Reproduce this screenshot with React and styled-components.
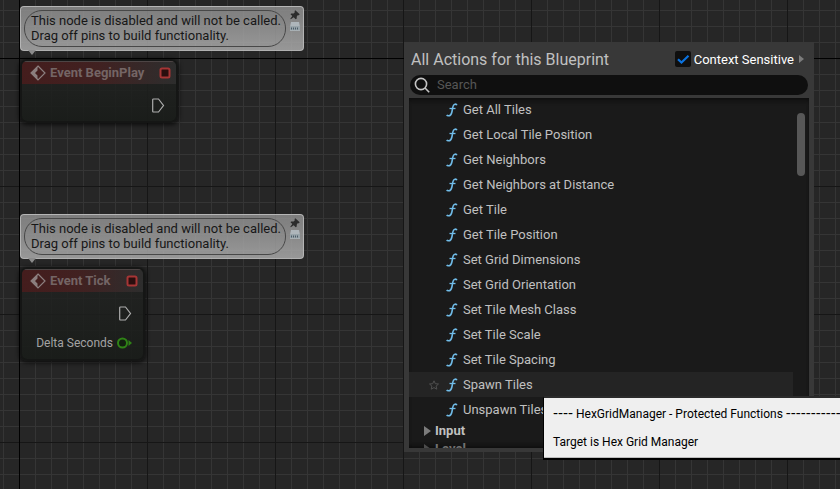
import React from "react";
import styled, { createGlobalStyle } from "styled-components";

const GlobalStyle = createGlobalStyle`
  * { box-sizing: border-box; }
  body {
    margin: 0;
    background: #262626;
    font-family: Roboto, "Liberation Sans", sans-serif;
    font-size: 13px;
    color: #c0c0c0;
  }
  button, input { font: inherit; color: inherit; }
`;

const Graph = styled.main`
  position: relative;
  min-height: 100vh;
  overflow: hidden;
  background-color: #262626;
  background-image:
    linear-gradient(90deg, #000 1px, transparent 1px),
    linear-gradient(#000 1px, transparent 1px),
    linear-gradient(90deg, #161616 1px, transparent 1px),
    linear-gradient(#161616 1px, transparent 1px),
    linear-gradient(90deg, #353535 1px, transparent 1px),
    linear-gradient(#353535 1px, transparent 1px);
  background-size: 1024px 1024px, 1024px 1024px, 128px 128px, 128px 128px, 16px 16px, 16px 16px;
  background-position: 19px 58px;
`;

const NodeSlot = styled.section`
  position: absolute;
  left: 20px;
  top: ${(p) => p.$top}px;
  display: flex;
  flex-direction: column;
  align-items: flex-start;
  gap: 8px;
`;

const Bubble = styled.div`
  position: relative;
  display: flex;
  gap: 4px;
  padding: 3px;
  border: 1px solid rgba(190, 190, 190, 0.8);
  border-radius: 4px;
  background: linear-gradient(rgba(150, 150, 150, 0.78), rgba(170, 170, 170, 0.86));
  &::after {
    content: "";
    position: absolute;
    left: 7px;
    top: 100%;
    border: 4px solid transparent;
    border-top: 5px solid #8b8b8b;
    border-bottom: 0;
  }
`;

const BubbleText = styled.p`
  margin: 0;
  padding: 2px 4px 3px 6px;
  border: 1px solid #484848;
  border-radius: 18px;
  line-height: 15px;
  color: #171717;
  white-space: nowrap;
`;

const BubbleTools = styled.div`
  display: flex;
  flex-direction: column;
  gap: 2px;
`;

const ToolButton = styled.button`
  display: flex;
  padding: 0;
  border: 0;
  background: none;
`;

const NodeBox = styled.article`
  width: ${(p) => p.$width}px;
  border: 2px solid #151615;
  border-radius: 7px;
  overflow: hidden;
  background: linear-gradient(rgba(34, 35, 34, 0.8), rgba(25, 28, 25, 0.92));
  box-shadow: 0 1px 4px 1px rgba(0, 0, 0, 0.65);
`;

const NodeHeader = styled.header`
  display: flex;
  align-items: center;
  gap: 4px;
  height: 23px;
  padding: 0 5px 0 8px;
  border-top: 1px solid #4d4545;
  background: linear-gradient(90deg, rgba(72, 28, 28, 0.9), rgba(70, 33, 33, 0.85) 50%, rgba(52, 46, 46, 0.8) 92%, rgba(48, 48, 48, 0.8));
`;

const NodeTitle = styled.h2`
  flex: 1;
  margin: 0;
  font-size: 13px;
  font-weight: 700;
  line-height: 16px;
  color: #746565;
  white-space: nowrap;
`;

const PinList = styled.div`
  display: flex;
  flex-direction: column;
  align-items: flex-end;
  gap: 14px;
  padding: 13px 11px 8px;
`;

const Pin = styled.div`
  display: flex;
  align-items: center;
  gap: 4px;
  height: 16px;
  font-size: 12px;
  color: #a3a3a3;
  white-space: nowrap;
`;

const Menu = styled.aside`
  position: absolute;
  left: 404px;
  top: 42px;
  width: 410px;
  padding: 5px 5px 4px;
  background: #383838;
`;

const MenuHeader = styled.header`
  display: flex;
  align-items: center;
  justify-content: space-between;
  height: 24px;
  padding: 0 5px 0 2px;
`;

const MenuTitle = styled.h1`
  margin: 0;
  font-size: 16px;
  font-weight: 400;
  color: #c0c0c0;
`;

const Context = styled.div`
  display: flex;
  align-items: center;
  gap: 5px;
  color: #fff;
`;

const CheckLabel = styled.label`
  display: flex;
  align-items: center;
  gap: 3px;
`;

const CheckSlot = styled.span`
  display: grid;
  > * { grid-area: 1 / 1; }
  svg { pointer-events: none; }
`;

const Checkbox = styled.input`
  appearance: none;
  width: 16px;
  height: 16px;
  margin: 0;
  border-radius: 2px;
  background: #0f0f0f;
`;

const SearchBar = styled.label`
  display: flex;
  align-items: center;
  gap: 7px;
  height: 20px;
  margin: 4px 1px 3px;
  padding: 0 10px 0 4px;
  border-radius: 10px;
  background: #0f0f0f;
`;

const SearchInput = styled.input`
  flex: 1;
  min-width: 0;
  padding: 0 0 2px;
  border: 0;
  outline: 0;
  background: none;
  &::placeholder { color: #565656; opacity: 1; }
`;

const Viewport = styled.div`
  display: flex;
  max-height: 350px;
  overflow: hidden;
  background: #1a1a1a;
  box-shadow: inset 0 5px 5px -3px #0c0c0c, inset 0 -5px 5px -3px #0c0c0c;
`;

const Actions = styled.ul`
  flex: 1;
  margin: -1px 0 0;
  padding: 0;
  list-style: none;
`;

const ActionRow = styled.li`
  display: flex;
  align-items: center;
  height: 25px;
  padding-left: 19px;
  background: ${(p) => (p.$active ? "#242424" : "transparent")};
`;

const StarSlot = styled.span`
  display: flex;
  width: 18px;
`;

const ActionButton = styled.button`
  display: flex;
  flex: 1;
  align-items: center;
  gap: 5px;
  padding: 0;
  border: 0;
  background: none;
  text-align: left;
  white-space: nowrap;
`;

const CategoryRow = styled.li`
  height: 18px;
  opacity: ${(p) => (p.$faded ? 0.55 : 1)};
`;

const CategoryButton = styled.button`
  display: flex;
  align-items: center;
  gap: 4px;
  height: 17px;
  padding: 0 0 0 15px;
  border: 0;
  background: none;
  font-weight: 700;
`;

const ScrollTrack = styled.div`
  width: 16px;
  padding: 15px 4px 0;
`;

const ScrollThumb = styled.div`
  height: 63px;
  border-radius: 4px;
  background: #575757;
`;

const Tooltip = styled.div`
  position: absolute;
  left: 543px;
  top: 396px;
  padding: 9px;
  border: 1px solid #000;
  border-top: 2px solid #2b2b2b;
  border-bottom-width: 2px;
  background: #efefef;
  box-shadow: inset 0 -1px #bdbdbd;
  font-size: 12px;
  line-height: 14px;
  color: #000;
  white-space: nowrap;
`;

const TooltipLine = styled.p`
  margin: 0;
  & + & { margin-top: 14px; }
`;

const Dashes = styled.span`
  font-family: "Liberation Sans", sans-serif;
  font-size: 15px;
  line-height: 1px;
`;

const EventIcon = () => (
  <svg width="16" height="16" viewBox="0 0 16 16" aria-hidden="true">
    <path d="M8 1 15 8 8 15 1 8Z" fill="none" stroke="#8b7e7e" strokeWidth="1.200" />
    <path d="M7.500 1.500 1 8l6.500 6.500V10.500L5 8 7.500 5.500Z" fill="#8b7e7e" />
  </svg>
);

const DelegateIcon = () => (
  <svg width="12" height="12" viewBox="0 0 12 12" aria-hidden="true">
    <rect x="1.500" y="1.500" width="9" height="9" rx="1.500" fill="#2a0e0e" stroke="#a63535" strokeWidth="2" />
  </svg>
);

const ExecIcon = () => (
  <svg width="13" height="15" viewBox="0 0 13 15" aria-hidden="true">
    <path d="M1.500 1h5l5 6.500-5 6.500h-5q-.8 0-.8-.8V1.800q0-.8.8-.8Z" fill="none" stroke="#adadad" strokeWidth="1.200" />
  </svg>
);

const ValueIcon = () => (
  <svg width="15" height="12" viewBox="0 0 15 12" aria-hidden="true">
    <circle cx="5.500" cy="6" r="4.500" fill="#122010" stroke="#2f8316" strokeWidth="2" />
    <path d="M11.500 3 15 6l-3.500 3Z" fill="#2f8316" />
  </svg>
);

const PinTackIcon = () => (
  <svg width="10" height="10" viewBox="0 0 10 10" aria-hidden="true">
    <path d="M5.300.3 9.700 4.300 8.800 5.200 7.600 5.200 6.800 6.500 6.600 8.800 5.700 9.200 3.700 7.200 .8 9.200 .3 8.800 2.300 6 .5 4.300 1.100 3.400 3.700 3.400 4.800 2.300 4.600 1Z" fill="#2c2c2c" />
  </svg>
);

const CommentIcon = () => (
  <svg width="10" height="9" viewBox="0 0 10 9" aria-hidden="true">
    <path d="M1 0h8l1 5H0Z" fill="#aeb6bb" />
    <rect y="4" width="10" height="5" fill="#98a4aa" />
    <path d="M1 6.500h1M3 6.500h1M5 6.500h1M7 6.500h1" stroke="#4b5c68" strokeWidth="2" />
    <path d="M0 8.500h10" stroke="#a8b0b4" />
  </svg>
);

const SearchIcon = () => (
  <svg width="16" height="16" viewBox="0 0 16 16" fill="none" stroke="#c4c4c4" strokeWidth="1.600" aria-hidden="true">
    <circle cx="7" cy="7" r="5.600" />
    <path d="m11 11 4.200 4.200" />
  </svg>
);

const CheckIcon = () => (
  <svg width="16" height="16" viewBox="0 0 16 16" aria-hidden="true">
    <path d="m3 8.200 3.500 3.300 7-6.800" fill="none" stroke="#0b73e0" strokeWidth="2.200" />
  </svg>
);

const FunctionIcon = () => (
  <svg width="12" height="14" viewBox="0 0 12 14" fill="none" stroke="#70bce8" aria-hidden="true">
    <path d="M10.800 2.200Q10.500 1 9 1.200C6.500 1.500 6.800 5 6 8.500Q5.200 12.800 2.500 12.800 1.200 12.900.8 11.900" strokeWidth="1.600" />
    <path d="M3.500 5.500h6" strokeWidth="1.300" />
  </svg>
);

const StarIcon = () => (
  <svg width="12" height="12" viewBox="0 0 12 12" aria-hidden="true">
    <path d="m6 1.800 1.300 2.900 3.200.3-2.400 2.100.7 3.100L6 8.600l-2.800 1.600.7-3.100L1.500 5l3.200-.3Z" fill="none" stroke="#505050" />
  </svg>
);

const Triangle = ({ width, height }) => (
  <svg width={width} height={height} viewBox="0 0 6 10" preserveAspectRatio="none" aria-hidden="true">
    <path d="M0 0 6 5 0 10Z" fill="#7c7c7c" />
  </svg>
);

const actions = [
  "Get All Tiles",
  "Get Local Tile Position",
  "Get Neighbors",
  "Get Neighbors at Distance",
  "Get Tile",
  "Get Tile Position",
  "Set Grid Dimensions",
  "Set Grid Orientation",
  "Set Tile Mesh Class",
  "Set Tile Scale",
  "Set Tile Spacing",
  "Spawn Tiles",
  "Unspawn Tiles",
];

function EventNode({ top, width, title, output }) {
  return (
    <NodeSlot $top={top}>
      <Bubble>
        <BubbleText>
          This node is disabled and will not be called.
          <br />
          Drag off pins to build functionality.
        </BubbleText>
        <BubbleTools>
          <ToolButton aria-label="Pin comment"><PinTackIcon /></ToolButton>
          <ToolButton aria-label="Toggle comment"><CommentIcon /></ToolButton>
        </BubbleTools>
      </Bubble>
      <NodeBox $width={width}>
        <NodeHeader>
          <EventIcon />
          <NodeTitle>{title}</NodeTitle>
          <DelegateIcon />
        </NodeHeader>
        <PinList>
          <Pin><ExecIcon /></Pin>
          {output && <Pin>{output}<ValueIcon /></Pin>}
        </PinList>
      </NodeBox>
    </NodeSlot>
  );
}

export default function App() {
  return (
    <>
      <GlobalStyle />
      <Graph>
        <EventNode top={6} width={158} title="Event BeginPlay" />
        <EventNode top={214} width={125} title="Event Tick" output="Delta Seconds" />
        <Menu>
          <MenuHeader>
            <MenuTitle>All Actions for this Blueprint</MenuTitle>
            <Context>
              <CheckLabel>
                <CheckSlot>
                  <Checkbox type="checkbox" defaultChecked />
                  <CheckIcon />
                </CheckSlot>
                Context Sensitive
              </CheckLabel>
              <Triangle width={5} height={8} />
            </Context>
          </MenuHeader>
          <SearchBar>
            <SearchIcon />
            <SearchInput type="text" placeholder="Search" aria-label="Search" />
          </SearchBar>
          <Viewport>
            <Actions>
              {actions.map((name) => (
                <ActionRow key={name} $active={name === "Spawn Tiles"}>
                  <StarSlot>{name === "Spawn Tiles" && <StarIcon />}</StarSlot>
                  <ActionButton><FunctionIcon />{name}</ActionButton>
                </ActionRow>
              ))}
              <CategoryRow>
                <CategoryButton><Triangle width={7} height={10} />Input</CategoryButton>
              </CategoryRow>
              <CategoryRow $faded>
                <CategoryButton><Triangle width={7} height={10} />Level</CategoryButton>
              </CategoryRow>
            </Actions>
            <ScrollTrack><ScrollThumb /></ScrollTrack>
          </Viewport>
        </Menu>
        <Tooltip role="tooltip">
          <TooltipLine>
            <Dashes>----</Dashes> HexGridManager - Protected Functions <Dashes>------------</Dashes>
          </TooltipLine>
          <TooltipLine>Target is Hex Grid Manager</TooltipLine>
        </Tooltip>
      </Graph>
    </>
  );
}
